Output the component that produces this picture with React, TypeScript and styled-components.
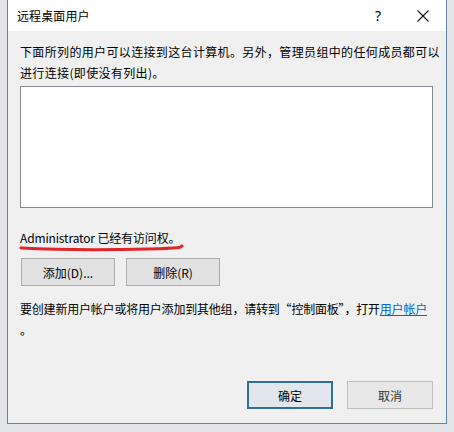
import React from "react";
import styled, { createGlobalStyle } from "styled-components";

const Global = createGlobalStyle`
  html, body { margin: 0; padding: 0; }
  body {
    background: #e3e5e8;
    font-family: "Noto Sans CJK SC", "Noto Sans", sans-serif;
    font-size: 12px;
    color: #000;
  }
`;

const Page = styled.div`
  width: 454px;
  height: 432px;
  display: flex;
  align-items: flex-start;
  background: #e3e5e8;
  overflow: hidden;
`;

const Dialog = styled.div`
  margin-left: 7px;
  width: 438px;
  height: 423px;
  border: 1px solid #5f84a6;
  border-top: none;
  display: flex;
  flex-direction: column;
  background: #f0f0f0;
`;

const TitleBar = styled.div`
  height: 31px;
  background: #fff;
  display: flex;
  align-items: center;
  padding: 0 17px 0 9px;
`;

const Title = styled.div`
  flex: 1;
  font-size: 12px;
  letter-spacing: 0.1px;
`;

const HelpGlyph = styled.div`
  width: 14px;
  font-family: "Noto Sans", sans-serif;
  font-size: 14px;
  text-align: center;
  margin-right: 32px;
`;

const CloseGlyph = styled.svg`
  width: 12px;
  height: 12px;
  display: block;
`;

const Body = styled.div`
  flex: 1;
  display: flex;
  flex-direction: column;
  padding: 10px 13px 14px 12px;
`;

const Para = styled.div<{ $gap?: number; $ls?: number }>`
  line-height: 21px;
  white-space: nowrap;
  letter-spacing: ${(p) => p.$ls ?? 0}px;
  margin-top: ${(p) => p.$gap ?? 0}px;
`;

const ListBox = styled.div`
  margin-top: 3px;
  height: 120px;
  background: #fff;
  border: 1px solid #828790;
`;

const AdminLine = styled.div`
  position: relative;
  margin-top: 19px;
  line-height: 21px;
  align-self: flex-start;
  letter-spacing: -0.15px;
`;

const RedMark = styled.svg`
  position: absolute;
  left: -1px;
  top: 15px;
  width: 166px;
  height: 10px;
  pointer-events: none;
`;

const ButtonRow = styled.div<{ $gap: number; $end?: boolean }>`
  display: flex;
  gap: ${(p) => p.$gap}px;
  justify-content: ${(p) => (p.$end ? "flex-end" : "flex-start")};
`;

const Btn = styled.div<{ $w: number; $variant?: "default" | "primary" | "disabled" }>`
  width: ${(p) => p.$w}px;
  height: 28px;
  box-sizing: border-box;
  display: flex;
  align-items: center;
  justify-content: center;
  font-size: 12px;
  background: ${(p) =>
    p.$variant === "primary" ? "#e2e7ee" : p.$variant === "disabled" ? "#e8e8e8" : "#e1e1e1"};
  border: ${(p) =>
    p.$variant === "primary"
      ? "2px solid #2f6f98"
      : p.$variant === "disabled"
      ? "1px solid #bfbfbf"
      : "1px solid #adadad"};
  color: ${(p) => (p.$variant === "disabled" ? "#333" : "#000")};
`;

const TopButtons = styled(ButtonRow)`
  margin-top: 10px;
  margin-left: 1px;
`;

const Link = styled.span`
  color: #0066cc;
  text-decoration: underline;
`;

const Spacer = styled.div`
  flex: 1;
`;

export default function App() {
  return (
    <>
      <Global />
      <Page>
        <Dialog>
          <TitleBar>
            <Title>远程桌面用户</Title>
            <HelpGlyph>?</HelpGlyph>
            <CloseGlyph viewBox="0 0 12 12">
              <path d="M0.5 0.5 L11.5 11.5 M11.5 0.5 L0.5 11.5" stroke="#111" strokeWidth="1.1" fill="none" />
            </CloseGlyph>
          </TitleBar>
          <Body>
            <Para $ls={0.35}>
              下面所列的用户可以连接到这台计算机。另外，管理员组中的任何成员都可以
              <br />
              进行连接(即使没有列出)。
            </Para>
            <ListBox />
            <AdminLine>
              Administrator 已经有访问权。
              <RedMark viewBox="0 0 166 10">
                <path
                  d="M2 6 C 40 8, 90 8, 130 7 S 160 5, 163 4"
                  stroke="#e0262b"
                  strokeWidth="3"
                  strokeLinecap="round"
                  fill="none"
                />
              </RedMark>
            </AdminLine>
            <TopButtons $gap={11}>
              <Btn $w={94}>添加(D)...</Btn>
              <Btn $w={94}>删除(R)</Btn>
            </TopButtons>
            <Para $gap={12} $ls={-0.2}>
              要创建新用户帐户或将用户添加到其他组，请转到“控制面板”，打开<Link>用户帐户</Link>
              <br />。
            </Para>
            <Spacer />
            <ButtonRow $gap={14} $end>
              <Btn $w={86} $variant="primary">确定</Btn>
              <Btn $w={86} $variant="disabled">取消</Btn>
            </ButtonRow>
          </Body>
        </Dialog>
      </Page>
    </>
  );
}
